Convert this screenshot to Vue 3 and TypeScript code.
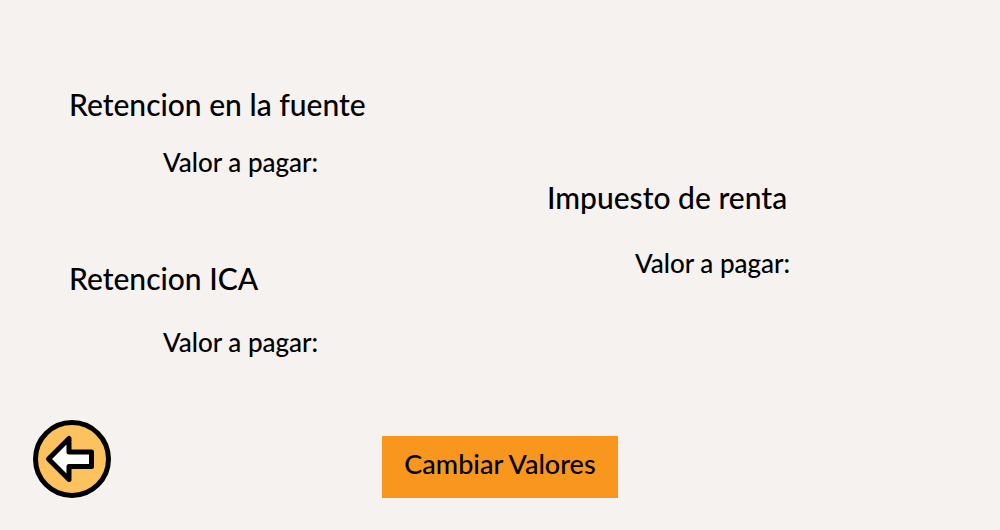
<script setup lang="ts">
interface Tax {
  id: string
  title: string
}

const withholdings: Tax[] = [
  { id: 'fuente', title: 'Retencion en la fuente' },
  { id: 'ica', title: 'Retencion ICA' },
]
const income: Tax = { id: 'renta', title: 'Impuesto de renta' }
</script>

<template>
  <div class="page">
    <main class="taxes">
      <div class="column">
        <section v-for="tax in withholdings" :key="tax.id" :class="['tax', tax.id]">
          <h2 class="title">{{ tax.title }}</h2>
          <p class="value">Valor a pagar:</p>
        </section>
      </div>
      <div class="column income">
        <section :class="['tax', income.id]">
          <h2 class="title">{{ income.title }}</h2>
          <p class="value">Valor a pagar:</p>
        </section>
      </div>
    </main>
    <footer class="actions">
      <button class="back" type="button" aria-label="Volver">
        <svg viewBox="0 0 78 78" aria-hidden="true">
          <circle cx="39" cy="39" r="36.5" fill="#fbc25e" stroke="#000" stroke-width="5" />
          <path
            d="M15.5 39 L36 18.5 V32 H58.5 V46.5 H36 V59.5 Z"
            fill="#fff"
            stroke="#000"
            stroke-width="5"
            stroke-linejoin="round"
          />
        </svg>
      </button>
      <button class="change" type="button">Cambiar Valores</button>
    </footer>
  </div>
</template>

<style>
body {
  margin: 0;
  background: #f6f2ef;
}
</style>

<style scoped>
.page {
  box-sizing: border-box;
  min-height: 100vh;
  display: flex;
  flex-direction: column;
  justify-content: space-between;
  padding: 86px 0 32px;
  background: #f6f2ef;
  color: #000;
  font-family: Lato, "Liberation Sans", sans-serif;
}
.taxes {
  display: grid;
  grid-template-columns: 1fr 1fr;
  column-gap: 25px;
  padding-left: 69px;
}
.column {
  display: flex;
  flex-direction: column;
  gap: 82px;
}
.income {
  padding-top: 93px;
}
.tax {
  display: flex;
  flex-direction: column;
  gap: 24px;
}
.ica {
  gap: 30px;
}
.renta {
  gap: 32px;
}
.title {
  margin: 0;
  font-size: 30px;
  line-height: 36px;
  font-weight: 500;
}
.value {
  margin: 0;
  padding-left: 94px;
  font-size: 26px;
  line-height: 32px;
  font-weight: 500;
}
.renta .value {
  padding-left: 88px;
}
.actions {
  display: grid;
  grid-template-columns: 1fr auto 1fr;
  align-items: end;
  padding: 0 33px;
}
.back {
  justify-self: start;
  width: 78px;
  height: 78px;
  padding: 0;
  border: 0;
  border-radius: 50%;
  background: none;
  cursor: pointer;
}
.back svg {
  display: block;
  width: 100%;
}
.change {
  padding: 12px 22px 18px;
  border: 0;
  background: #f8961e;
  color: inherit;
  font-family: inherit;
  font-size: 27px;
  line-height: 32px;
  font-weight: 500;
  cursor: pointer;
}
</style>
